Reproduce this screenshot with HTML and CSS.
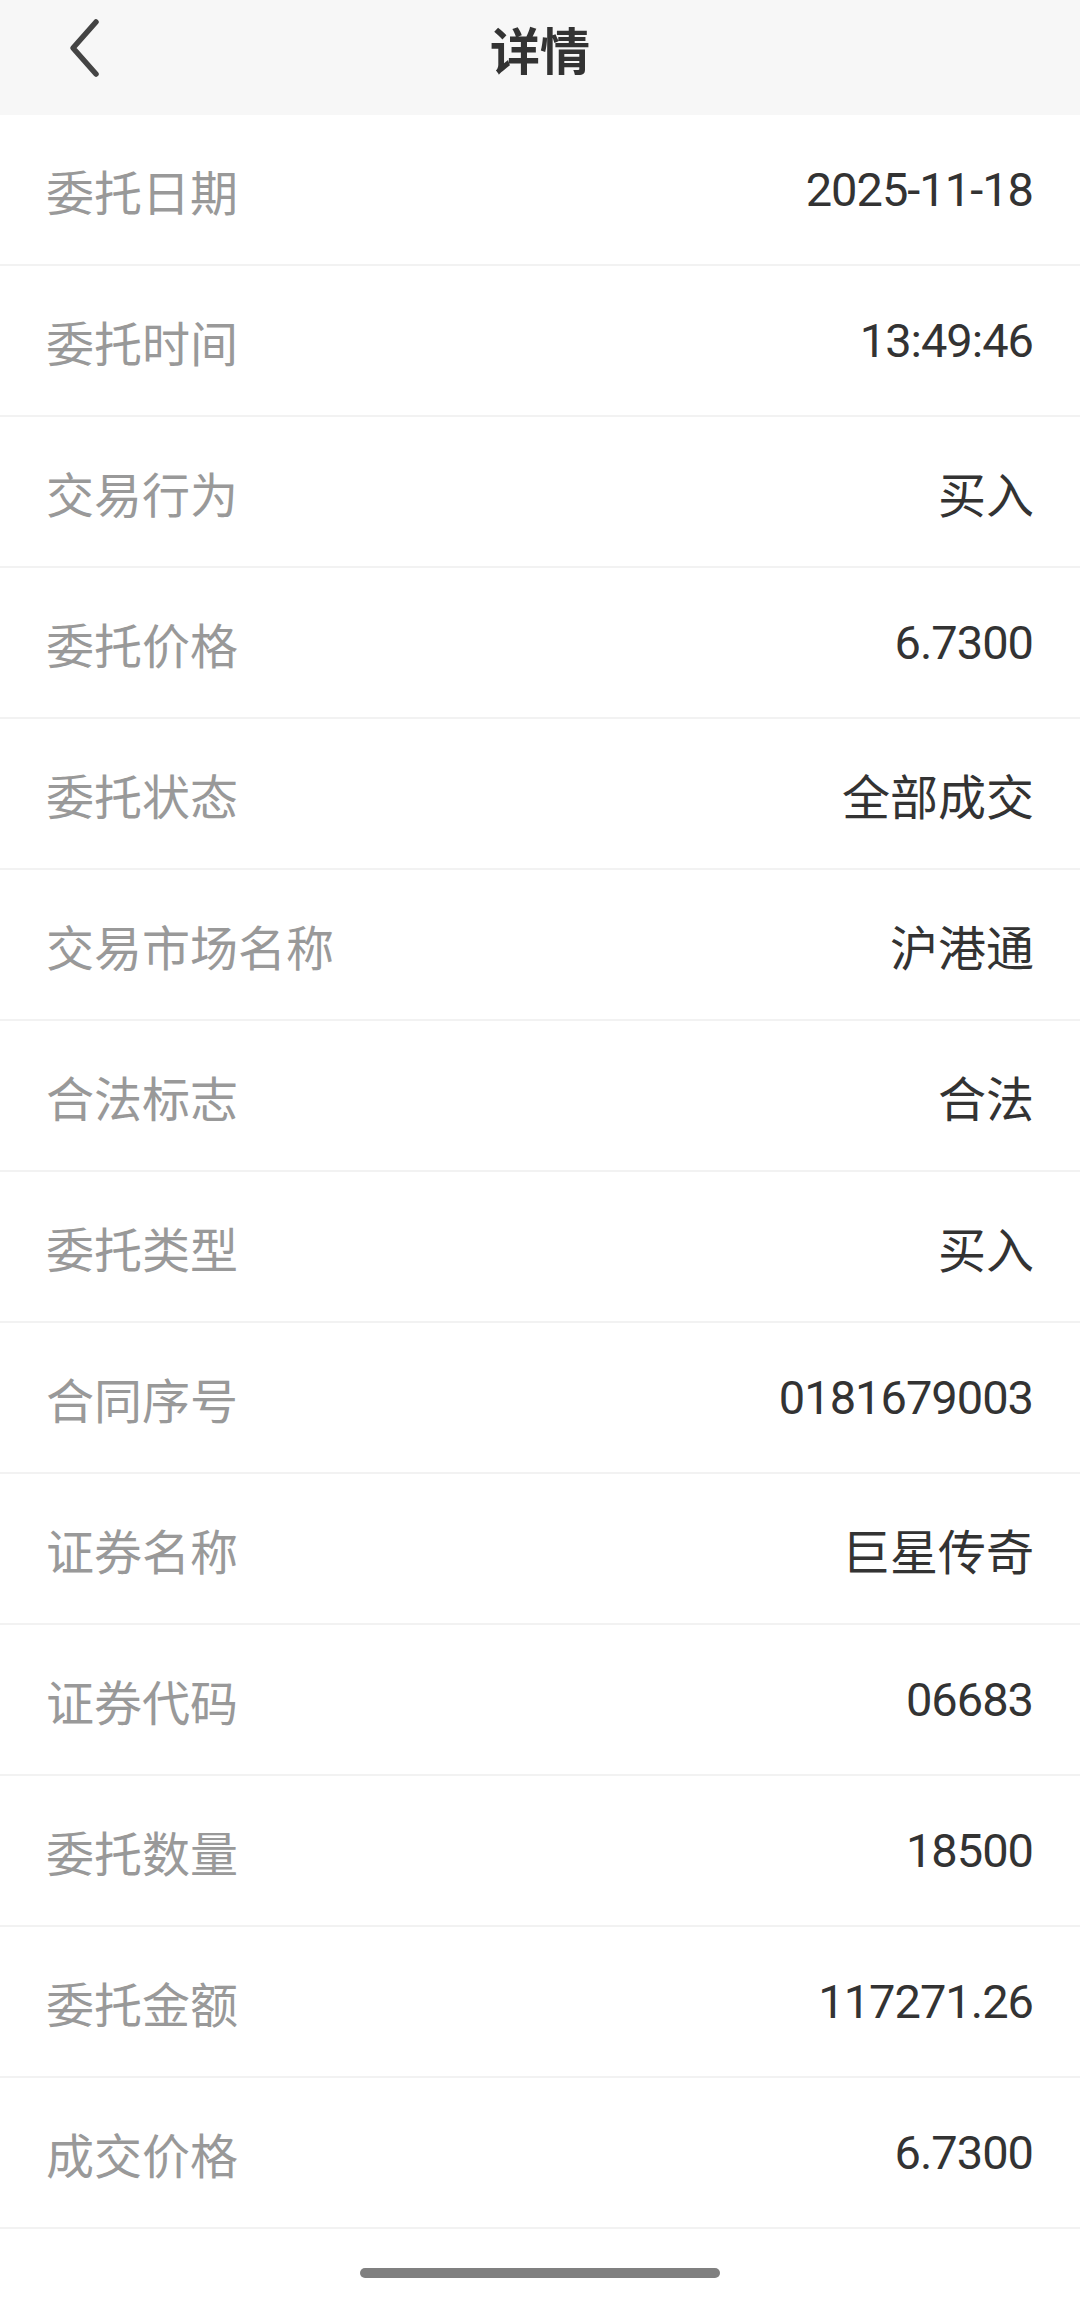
FILE: index.html
```html
<!DOCTYPE html>
<html lang="zh-CN">
<head>
    <meta charset="UTF-8">
    <meta name="viewport" content="width=device-width, initial-scale=1.0">
    <title>详情</title>
    <link rel="stylesheet" href="styles.css">
</head>
<body>
    <div class="header">
        <span class="back">
            <svg width="40" height="64" viewBox="0 0 40 64">
                <path d="M30 5 L7 31 L30 57" fill="none" stroke="#444" stroke-width="5.5" stroke-linecap="round" stroke-linejoin="round"/>
            </svg>
        </span>
        <h1>详情</h1>
    </div>

    <div class="list">
        <div class="row"><span class="label">委托日期</span><span class="value num">2025-11-18</span></div>
        <div class="row"><span class="label">委托时间</span><span class="value num">13:49:46</span></div>
        <div class="row"><span class="label">交易行为</span><span class="value">买入</span></div>
        <div class="row"><span class="label">委托价格</span><span class="value num">6.7300</span></div>
        <div class="row"><span class="label">委托状态</span><span class="value">全部成交</span></div>
        <div class="row"><span class="label">交易市场名称</span><span class="value">沪港通</span></div>
        <div class="row"><span class="label">合法标志</span><span class="value">合法</span></div>
        <div class="row"><span class="label">委托类型</span><span class="value">买入</span></div>
        <div class="row"><span class="label">合同序号</span><span class="value num">0181679003</span></div>
        <div class="row"><span class="label">证券名称</span><span class="value">巨星传奇</span></div>
        <div class="row"><span class="label">证券代码</span><span class="value num">06683</span></div>
        <div class="row"><span class="label">委托数量</span><span class="value num">18500</span></div>
        <div class="row"><span class="label">委托金额</span><span class="value num">117271.26</span></div>
        <div class="row"><span class="label">成交价格</span><span class="value num">6.7300</span></div>
    </div>

    <div class="home-bar"></div>
</body>
</html>
```

FILE: styles.css
```css
body {
    margin: 0;
    background-color: #fff;
    font-family: "Noto Sans CJK SC", "Noto Sans", sans-serif;
    color: #333;
}

.header {
    position: relative;
    height: 115px;
    background-color: #f7f7f7;
    display: flex;
    align-items: center;
    justify-content: center;
}

.back {
    position: absolute;
    left: 66px;
    top: 17px;
    line-height: 0;
}

h1 {
    margin: 0 0 20px;
    font-size: 50px;
    font-weight: 700;
    color: #333;
}

.row {
    height: 149px;
    border-bottom: 2px solid #f2f2f2;
    padding: 0 46px;
    display: flex;
    align-items: center;
    justify-content: space-between;
}

.label {
    font-size: 48px;
    color: #999;
}

.value {
    font-size: 48px;
    color: #333;
}

.value.num {
    font-family: Roboto, "Noto Sans", sans-serif;
    font-size: 47px;
    letter-spacing: -1px;
    margin-right: 1px;
}

.home-bar {
    width: 360px;
    height: 10px;
    margin: 39px auto 0;
    border-radius: 5px;
    background-color: #808080;
}
```
